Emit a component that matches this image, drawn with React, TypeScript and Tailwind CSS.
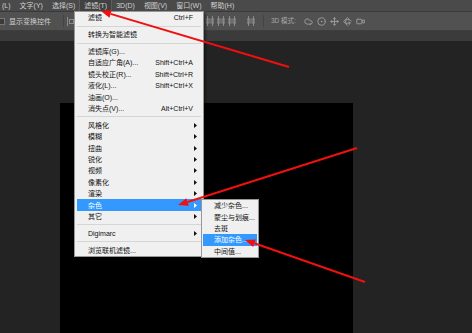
import * as React from "react";
import { Rotate3d, CircleDot, Move, Video, Cloud } from "lucide-react";

const font = "font-['Liberation_Sans','Noto_Sans_CJK_SC',sans-serif]";

type Item =
   | { kind: "sep" }
   | { kind: "item"; label: string; key?: string; sub?: boolean; active?: boolean };

const filterMenu: Item[] = [
   { kind: "item", label: "滤镜", key: "Ctrl+F" },
   { kind: "sep" },
   { kind: "item", label: "转换为智能滤镜" },
   { kind: "sep" },
   { kind: "item", label: "滤镜库(G)..." },
   { kind: "item", label: "自适应广角(A)...", key: "Shift+Ctrl+A" },
   { kind: "item", label: "镜头校正(R)...", key: "Shift+Ctrl+R" },
   { kind: "item", label: "液化(L)...", key: "Shift+Ctrl+X" },
   { kind: "item", label: "油画(O)..." },
   { kind: "item", label: "消失点(V)...", key: "Alt+Ctrl+V" },
   { kind: "sep" },
   { kind: "item", label: "风格化", sub: true },
   { kind: "item", label: "模糊", sub: true },
   { kind: "item", label: "扭曲", sub: true },
   { kind: "item", label: "锐化", sub: true },
   { kind: "item", label: "视频", sub: true },
   { kind: "item", label: "像素化", sub: true },
   { kind: "item", label: "渲染", sub: true },
   { kind: "item", label: "杂色", sub: true, active: true },
   { kind: "item", label: "其它", sub: true },
   { kind: "sep" },
   { kind: "item", label: "Digimarc", sub: true },
   { kind: "sep" },
   { kind: "item", label: "浏览联机滤镜..." },
];

const noiseMenu = [
   { label: "减少杂色..." },
   { label: "蒙尘与划痕..." },
   { label: "去斑" },
   { label: "添加杂色...", active: true },
   { label: "中间值..." },
];

const topMenu = ["(L)", "文字(Y)", "选择(S)", "滤镜(T)", "3D(D)", "视图(V)", "窗口(W)", "帮助(H)"];

function Caret({ white }: { white?: boolean }) {
   return (
      <svg width="3" height="5" viewBox="0 0 3 5" className="shrink-0">
         <path d="M0 0 L3 2.5 L0 5 Z" fill={white ? "#ffffff" : "#111111"} />
      </svg>
   );
}

function Distribute() {
   return (
      <svg width="8" height="10" viewBox="0 0 8 10" className="shrink-0">
         <path d="M1.5 0 V10 M6.5 0 V10" stroke="#8a8a8a" strokeWidth="1" />
         <rect x="0" y="3" width="3" height="4" fill="none" stroke="#8a8a8a" strokeWidth="1" />
         <rect x="5" y="3" width="3" height="4" fill="none" stroke="#8a8a8a" strokeWidth="1" />
      </svg>
   );
}

function Arrow({ x1, y1, x2, y2 }: { x1: number; y1: number; x2: number; y2: number }) {
   const dx = x2 - x1;
   const dy = y2 - y1;
   const len = Math.sqrt(dx * dx + dy * dy);
   const ux = dx / len;
   const uy = dy / len;
   const bx = x2 - ux * 10;
   const by = y2 - uy * 10;
   const nx = -uy * 4;
   const ny = ux * 4;
   return (
      <g>
         <line x1={x1} y1={y1} x2={bx} y2={by} stroke="#f01010" strokeWidth="2" />
         <polygon
            points={`${x2},${y2} ${bx + nx},${by + ny} ${bx - nx},${by - ny}`}
            fill="#f01010"
         />
      </g>
   );
}

export default function App() {
   return (
      <div className={`relative w-[472px] h-[333px] overflow-hidden bg-[#232323] flex flex-col ${font}`}>
         {/* menu bar */}
         <div className="h-[12px] bg-[#4a4a4a] flex items-center pl-[2px] gap-[9px] text-[7px] text-[#d0d0d0] border-b border-[#3a3a3a]">
            {topMenu.map((m) => (
               <span
                  key={m}
                  className={
                     m === "滤镜(T)"
                        ? "h-full flex items-center px-[4px] -mx-[4px] bg-[#414141] outline outline-1 outline-[#5c5c5c] leading-none"
                        : "leading-none"
                  }
               >
                  {m}
               </span>
            ))}
         </div>

         {/* options bar */}
         <div className="h-[19px] bg-[#515151] flex items-center text-[7px] text-[#d0d0d0] border-b border-[#3e3e3e]">
            <div className="w-[5px] h-[7px] bg-[#3b3b3b] border border-[#777] border-l-0" />
            <span className="ml-[4px] leading-none">显示变换控件</span>
            <div className="ml-[12px] w-px h-[12px] bg-[#444]" />
            <svg width="7" height="9" viewBox="0 0 7 9" className="ml-[3px]">
               <path d="M0.5 0 V9" stroke="#8a8a8a" />
               <rect x="2.5" y="2.5" width="4" height="4" fill="none" stroke="#8a8a8a" />
            </svg>
            <div className="ml-[132px] flex items-center gap-[3px]">
               <Distribute />
               <Distribute />
               <Distribute />
            </div>
            <div className="ml-[11px] flex items-center">
               <Distribute />
            </div>
            <div className="ml-[8px] w-px h-[12px] bg-[#444]" />
            <span className="ml-[7px] leading-none text-[#a8a8a8] text-[6.5px]">3D 模式:</span>
            <div className="ml-[8px] flex items-center gap-[4px] text-[#9a9a9a]">
               <Cloud size={9} strokeWidth={2.6} />
               <CircleDot size={9} strokeWidth={2.6} />
               <Move size={9} strokeWidth={2.6} />
               <Rotate3d size={9} strokeWidth={2.6} />
               <Video size={9} strokeWidth={2.6} />
            </div>
         </div>

         {/* document tab strip */}
         <div className="h-[10px] bg-[#3b3b3b]" />

         {/* workspace */}
         <div className="flex-1 pl-[60px] pt-[62px]">
            <div className="w-[293px] h-full bg-black" />
         </div>

         {/* filter dropdown */}
         <div className="absolute left-[74px] top-[11px] w-[130px] bg-[#f0f0f0] border border-[#979797] text-[7px] text-[#111] shadow-[2px_2px_2px_rgba(0,0,0,0.4)]">
            {filterMenu.map((it, i) =>
               it.kind === "sep" ? (
                  <div key={i} className="h-[5.5px] flex items-center px-[2px]">
                     <div className="h-px w-full bg-[#d5d5d5]" />
                  </div>
               ) : (
                  <div key={i} className="h-[11.4px] px-[2px]">
                     <div
                        className={`h-full flex items-center pl-[11px] pr-[4px] ${
                           it.active ? "bg-[#3399ff] text-white" : ""
                        }`}
                     >
                        <span className="flex-1 leading-none whitespace-nowrap">{it.label}</span>
                        {it.key && <span className="leading-none mr-[4px]">{it.key}</span>}
                        {it.sub && <Caret white={it.active} />}
                     </div>
                  </div>
               )
            )}
         </div>

         {/* noise submenu */}
         <div className="absolute left-[201px] top-[199px] w-[58px] bg-[#f0f0f0] border border-[#979797] text-[7px] text-[#111] shadow-[2px_2px_2px_rgba(0,0,0,0.4)]">
            {noiseMenu.map((it) => (
               <div key={it.label} className="h-[11.4px] px-[1px]">
                  <div
                     className={`h-full flex items-center pl-[11px] ${
                        it.active ? "bg-[#3399ff] text-white" : ""
                     }`}
                  >
                     <span className="leading-none whitespace-nowrap">{it.label}</span>
                  </div>
               </div>
            ))}
         </div>

         {/* red annotation arrows */}
         <svg className="absolute inset-0 pointer-events-none" width="472" height="333">
            <Arrow x1={289} y1={67} x2={101} y2={11} />
            <Arrow x1={357} y1={148} x2={178} y2={205} />
            <Arrow x1={365} y1={282} x2={245} y2={240} />
         </svg>
      </div>
   );
}
